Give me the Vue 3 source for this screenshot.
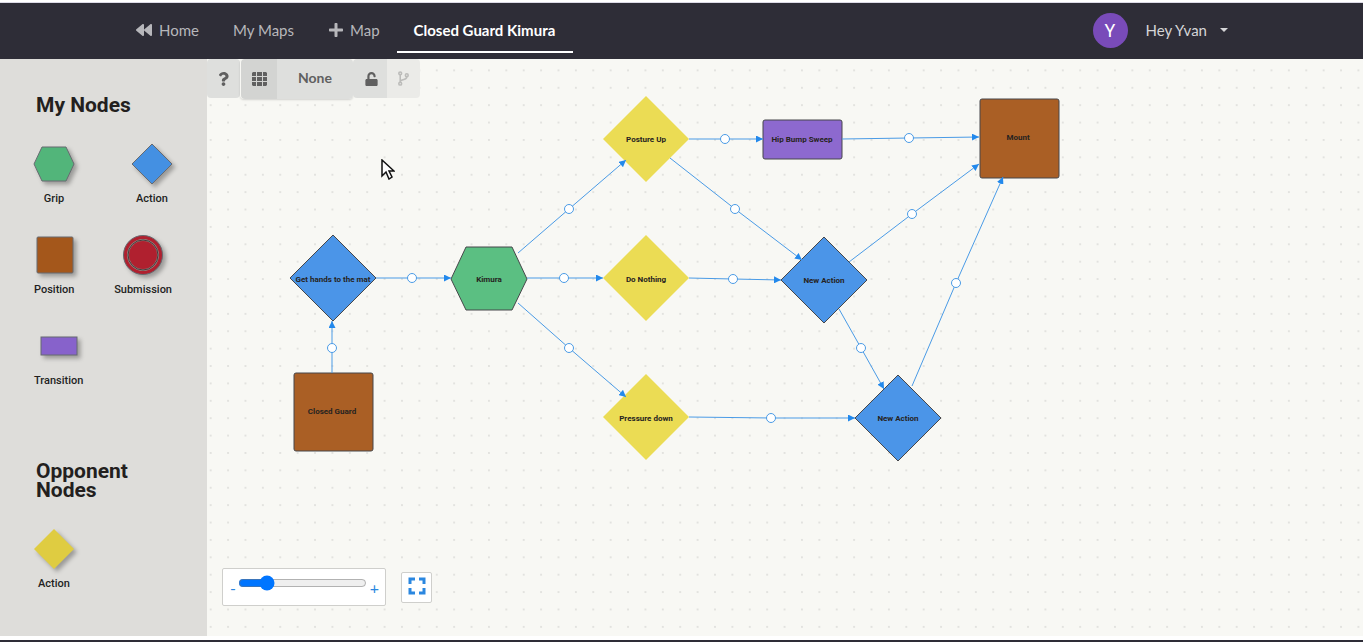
<script setup>
import { ref } from 'vue'

const zoom = ref(18)

const myNodes = [
  [
    { label: 'Grip', shape: 'hexagon', fill: '#52b57a' },
    { label: 'Action', shape: 'diamond', fill: '#4490e2' }
  ],
  [
    { label: 'Position', shape: 'square', fill: '#a4571b' },
    { label: 'Submission', shape: 'ring', fill: '#b0202f' }
  ],
  [{ label: 'Transition', shape: 'bar', fill: '#8762cb' }]
]
const opponentNodes = [[{ label: 'Action', shape: 'diamond', fill: '#dfcc41', plain: true }]]

const sections = [
  { title: 'My Nodes', rows: myNodes },
  { title: 'Opponent Nodes', rows: opponentNodes }
]

const diamond = (x, y) => `${x},${y - 43} ${x + 43},${y} ${x},${y + 43} ${x - 43},${y}`

const polygons = [
  { points: diamond(126, 219), kind: 'blue' },
  { points: '259,188 305,188 320,220 305,251 259,251 244,220', kind: 'green' },
  { points: diamond(439, 80), kind: 'yellow' },
  { points: diamond(439, 219), kind: 'yellow' },
  { points: diamond(439, 358), kind: 'yellow' },
  { points: diamond(617, 221), kind: 'blue' },
  { points: diamond(691, 359), kind: 'blue' }
]
const boxes = [
  { x: 87, y: 314, w: 79, h: 78, kind: 'brown' },
  { x: 556, y: 61, w: 79, h: 39, kind: 'purple' },
  { x: 773, y: 40, w: 79, h: 79, kind: 'brown' }
]
const titles = [
  { x: 126, y: 223, text: 'Get hands to the mat' },
  { x: 282, y: 223, text: 'Kimura' },
  { x: 125, y: 355, text: 'Closed Guard' },
  { x: 439, y: 83, text: 'Posture Up' },
  { x: 439, y: 223, text: 'Do Nothing' },
  { x: 439, y: 362, text: 'Pressure down' },
  { x: 595, y: 83, text: 'Hip Bump Sweep' },
  { x: 811, y: 81, text: 'Mount' },
  { x: 617, y: 224, text: 'New Action' },
  { x: 691, y: 362, text: 'New Action' }
]
const edges = [
  { from: [125, 314], to: [125, 262], mid: [125, 289] },
  { from: [169, 219], to: [244, 219], mid: [205, 219] },
  { from: [311, 194], to: [419, 101], mid: [362, 150] },
  { from: [320, 219], to: [396, 219], mid: [357, 219] },
  { from: [311, 244], to: [419, 338], mid: [362, 289] },
  { from: [482, 80], to: [556, 80], mid: [518, 80] },
  { from: [463, 99], to: [595, 201], mid: [528, 150] },
  { from: [482, 219], to: [574, 221], mid: [526, 220] },
  { from: [482, 358], to: [648, 359], mid: [564, 359] },
  { from: [635, 80], to: [772, 78], mid: [702, 79] },
  { from: [642, 203], to: [772, 105], mid: [705, 155] },
  { from: [632, 250], to: [677, 330], mid: [654, 289] },
  { from: [705, 327], to: [796, 118], mid: [749, 224] }
]
</script>

<template>
  <div class="page">
    <header class="topbar">
      <div class="container">
        <nav class="menu" aria-label="Main">
          <a class="item home" href="#">
            <svg class="icon" viewBox="0 0 512 512" aria-hidden="true"><path d="M11.500 280.600l192 160c20.600 17.200 52.500 2.800 52.500-24.600V96c0-27.400-31.900-41.800-52.500-24.600l-192 160c-15.300 12.800-15.300 36.400 0 49.200zm256 0l192 160c20.600 17.200 52.500 2.800 52.500-24.600V96c0-27.400-31.900-41.800-52.500-24.600l-192 160c-15.300 12.800-15.300 36.400 0 49.200z" /></svg>
            Home
          </a>
          <a class="item" href="#">My Maps</a>
          <a class="item add" href="#">
            <svg class="icon" viewBox="-32 0 512 512" aria-hidden="true"><path d="M416 208H272V64c0-18-14-32-32-32h-32c-18 0-32 14-32 32v144H32c-18 0-32 14-32 32v32c0 18 14 32 32 32h144v144c0 18 14 32 32 32h32c18 0 32-14 32-32V304h144c18 0 32-14 32-32v-32c0-18-14-32-32-32z" /></svg>
            Map
          </a>
          <a class="item active" href="#" aria-current="page">Closed Guard Kimura</a>
        </nav>
        <button class="user" type="button">
          <span class="avatar">Y</span>
          <span>Hey Yvan</span>
          <svg class="caret" viewBox="0 0 8 4" aria-hidden="true"><path d="M0 0H8L4 4Z" /></svg>
        </button>
      </div>
    </header>

    <main class="workspace">
      <aside class="palette">
        <section v-for="section in sections" :key="section.title" class="group">
          <h2>{{ section.title }}</h2>
          <div v-for="(row, i) in section.rows" :key="i" class="row">
            <div v-for="node in row" :key="node.label" class="node">
              <svg class="swatch" viewBox="1 1 40 40" :fill="node.fill" :stroke="node.plain ? 'none' : '#666a70'" aria-hidden="true">
                <path v-if="node.shape === 'hexagon'" d="M9 4H33L41 21L33 38H9L1 21Z" />
                <path v-else-if="node.shape === 'diamond'" d="M21 1L41 21L21 41L1 21Z" />
                <rect v-else-if="node.shape === 'square'" x="4" y="3" width="36" height="36" rx="1" />
                <rect v-else-if="node.shape === 'bar'" x="3" y="12" width="36" height="18" />
                <template v-else>
                  <circle cx="21" cy="21" r="19.500" />
                  <circle cx="21" cy="21" r="15" stroke="#8f8580" stroke-width="2" />
                  <circle cx="21" cy="21" r="15" fill="none" stroke="#4b3a3c" stroke-width="1" />
                </template>
              </svg>
              <span>{{ node.label }}</span>
            </div>
          </div>
        </section>
      </aside>

      <section class="board" aria-label="Map">
        <svg class="graph">
          <defs>
            <pattern id="dots" width="20" height="20" patternUnits="userSpaceOnUse" patternTransform="translate(-5 -6) scale(.8695)">
              <circle cx="10" cy="20" r="1" fill="#d8d8d5" />
              <circle cx="10" cy="0" r="1" fill="#d8d8d5" />
            </pattern>
            <marker id="arrow" viewBox="0 0 7 7" refX="7" refY="3.500" markerWidth="7" markerHeight="7" markerUnits="userSpaceOnUse" orient="auto">
              <path d="M0 0L7 3.500L0 7Z" fill="#2389ec" />
            </marker>
          </defs>
          <rect width="100%" height="100%" fill="url(#dots)" />
          <polygon v-for="(p, i) in polygons" :key="'p' + i" :points="p.points" :class="['shape', p.kind]" />
          <rect v-for="(b, i) in boxes" :key="'b' + i" :x="b.x" :y="b.y" :width="b.w" :height="b.h" rx="2" :class="['shape', b.kind]" />
          <g v-for="(e, i) in edges" :key="'e' + i" class="edge">
            <polyline :points="`${e.from} ${e.mid} ${e.to}`" marker-end="url(#arrow)" />
            <circle :cx="e.mid[0]" :cy="e.mid[1]" r="4.500" />
          </g>
          <text v-for="(t, i) in titles" :key="'t' + i" :x="t.x" :y="t.y" class="title">{{ t.text }}</text>
        </svg>

        <div class="toolbar">
          <button type="button" class="tool" aria-label="Help">
            <svg class="small" viewBox="-64 0 512 512" aria-hidden="true"><path d="M202 0C122 0 70 33 30 91c-7 11-5 25 5 33l43 33c10 8 25 6 33-4 25-32 44-50 83-50 31 0 69 20 69 50 0 22-19 34-49 51-36 20-82 44-82 106v10c0 13 10 24 24 24h72c14 0 24-11 24-24v-6c0-43 126-44 126-160C378 66 287 0 202 0zM192 373c-38 0-69 31-69 70s31 69 69 69 69-31 69-69-31-70-69-70z" /></svg>
          </button>
          <div class="pair">
            <button type="button" class="tool grid" aria-label="Grid">
              <svg class="small" viewBox="0 0 15 14" aria-hidden="true"><path d="M1 0h3v4H0V1ZM5 0h5v4H5ZM11 0h3l1 1v3h-4ZM0 5h4v4H0ZM5 5h5v4H5ZM11 5h4v4h-4ZM0 10h4v4H1L0 13ZM5 10h5v4H5ZM11 10h4v3l-1 1h-3Z" /></svg>
            </button>
            <button type="button" class="tool choice">None</button>
          </div>
          <button type="button" class="tool lock" aria-label="Unlock">
            <svg class="small" viewBox="-32 0 512 512" aria-hidden="true"><path d="M400 256H152V153c0-40 32-73 71-73 40 0 73 32 73 72v16c0 13 11 24 24 24h32c13 0 24-11 24-24v-16C376 68 307 0 223 0 139 0 72 69 72 153v103H48c-26 0-48 21-48 48v160c0 26 22 48 48 48h352c26 0 48-22 48-48V304c0-27-22-48-48-48z" /></svg>
          </button>
          <button type="button" class="tool fork" aria-label="Branch" disabled>
            <svg class="small" viewBox="-64 0 512 512" fill="none" stroke="currentColor" stroke-width="54" aria-hidden="true"><circle cx="80" cy="80" r="48" /><circle cx="80" cy="432" r="48" /><circle cx="304" cy="144" r="48" /><path d="M80 128V384M304 192C304 290 220 270 100 330" /></svg>
          </button>
        </div>

        <svg class="pointer" viewBox="0 0 14 21" aria-hidden="true"><path d="M1 1V17L5 13L8 20L11 18L8 12H13Z" fill="#fff" stroke="#111" stroke-width="1.500" /></svg>

        <div class="controls">
          <div class="zoom">
            <span>-</span>
            <input v-model="zoom" type="range" min="0" max="100" aria-label="Zoom" />
            <span>+</span>
          </div>
          <button type="button" class="fit" aria-label="Fit to screen">
            <svg viewBox="0 0 18 18" aria-hidden="true"><path d="M2 7V2H7M11 2H16V7M16 11V16H11M7 16H2V11" fill="none" stroke="#2b87e0" stroke-width="3" /></svg>
          </button>
        </div>
      </section>
    </main>
  </div>
</template>

<style>
body {
  background: #fff;
}
</style>

<style scoped>
* {
  box-sizing: border-box;
}
.page {
  display: flex;
  flex-direction: column;
  min-height: 100vh;
  padding-top: 2px;
  border-bottom: 2px solid #2e2d37;
  font-family: Lato, "Liberation Sans", sans-serif;
}
button {
  border: 0;
  padding: 0;
  font: inherit;
  background: none;
}
.topbar {
  border-top: 1px solid #dcdae6;
  background: #2e2d37;
}
.container {
  display: flex;
  justify-content: space-between;
  max-width: 1127px;
  height: 56px;
  margin: 0 auto;
}
.menu {
  display: flex;
  height: 50px;
}
.item {
  display: flex;
  align-items: center;
  padding: 6px 17px 0;
  border-bottom: 2px solid transparent;
  color: #b7b7bb;
  font-size: 15px;
  line-height: 20px;
  text-decoration: none;
}
.home {
  padding-left: 18px;
}
.item.active {
  padding-right: 18px;
  border-color: #fff;
  color: #fff;
  font-weight: 700;
}
.icon {
  width: 16px;
  height: 16px;
  margin-right: 7px;
  fill: currentColor;
}
.add .icon {
  margin-right: 6px;
}
.user {
  display: flex;
  align-items: center;
  padding: 0 17px 2px;
  color: #d5d5d7;
  font-size: 15px;
  line-height: 20px;
}
.avatar {
  width: 35px;
  margin-right: 18px;
  border-radius: 50%;
  background: #794bb9;
  color: #fff;
  font-family: Roboto, sans-serif;
  font-size: 18px;
  line-height: 35px;
}
.caret {
  width: 8px;
  height: 4px;
  margin-left: 13px;
  fill: currentColor;
}
.workspace {
  display: flex;
  flex: 1;
  margin-bottom: 4px;
}
.palette {
  width: 207px;
  padding: 37px 35px 20px 34px;
  background: #deddda;
  color: #231f1e;
  font-family: Roboto, sans-serif;
}
h2 {
  margin: 0 0 29px 2px;
  font-size: 21px;
  font-weight: 700;
  line-height: 19px;
}
.group + .group {
  margin-top: 45px;
}
.row {
  display: flex;
  justify-content: space-between;
  height: 91px;
}
.group + .group .row {
  height: 63px;
}
.node {
  display: flex;
  flex-direction: column;
  align-items: center;
  font-size: 11px;
  font-weight: 500;
  line-height: 14px;
}
.swatch {
  width: 40px;
  height: 40px;
  margin-bottom: 8px;
  overflow: visible;
  filter: drop-shadow(3px 3px 2px rgba(0, 0, 0, 0.3));
}
.board {
  position: relative;
  flex: 1;
  overflow: hidden;
  background: #f8f8f4;
}
.graph {
  position: absolute;
  inset: 0;
  width: 100%;
  height: 100%;
}
.shape {
  stroke: #46474a;
}
.blue { fill: #4b95e8; }
.green { fill: #5bbf82; }
.yellow { fill: #ebdc54; stroke: none; }
.brown { fill: #aa5f25; }
.purple { fill: #8d69cf; }
.edge {
  fill: none;
  stroke: #4a9be6;
}
.edge circle {
  fill: #fff;
}
.title {
  fill: #262321;
  font: 700 8px Roboto, sans-serif;
  text-anchor: middle;
}
.toolbar {
  position: absolute;
  top: 0;
  left: 0;
  display: flex;
  height: 39px;
  color: #606060;
}
.tool {
  display: flex;
  align-items: center;
  justify-content: center;
  width: 33px;
  height: 39px;
  border-radius: 4px;
  background: #dedfdd;
  color: inherit;
}
.pair {
  display: flex;
  width: 113px;
  height: 40px;
  padding-left: 1px;
  border-radius: 4px;
  box-shadow: 0 1px 2px rgba(0, 0, 0, 0.15);
}
.tool.grid {
  width: 36px;
  height: 40px;
  border-radius: 4px 0 0 4px;
  background: #d3d4d2;
}
.tool.choice {
  flex: 1;
  height: 40px;
  padding-bottom: 3px;
  border-radius: 0 4px 4px 0;
  font-size: 14px;
  font-weight: 700;
}
.tool.lock {
  width: 34px;
  padding-left: 2px;
  border-radius: 4px 0 0 4px;
}
.tool.fork {
  border-radius: 0 4px 4px 0;
  background: #ebebe8;
  color: #bcbcba;
}
.small {
  width: 15px;
  height: 14px;
  fill: currentColor;
}
.fork .small {
  height: 15px;
  fill: none;
}
.pointer {
  position: absolute;
  top: 100px;
  left: 174px;
  width: 14px;
  height: 21px;
}
.controls {
  position: absolute;
  bottom: 30px;
  left: 15px;
  display: flex;
  align-items: center;
  gap: 15px;
}
.zoom {
  display: flex;
  align-items: center;
  justify-content: space-between;
  width: 164px;
  height: 38px;
  padding: 0 6px 0 7px;
  border: 1px solid #cfcfcc;
  border-radius: 2px;
  background: #fff;
  color: #2b87e0;
  font-size: 16px;
}
.zoom span {
  padding-top: 1px;
}
.zoom input {
  width: 129px;
  margin: 0 0 8px;
}
.fit {
  display: grid;
  place-items: center;
  width: 31px;
  height: 31px;
  padding-bottom: 2px;
  border: 1px solid #cfcfcc;
  border-radius: 2px;
  background: #fff;
}
.fit svg {
  width: 18px;
  height: 18px;
}
</style>
